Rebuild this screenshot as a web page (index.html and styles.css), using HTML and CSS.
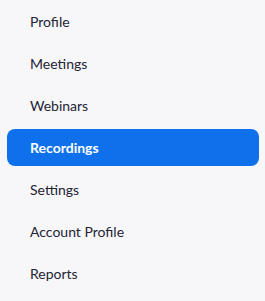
FILE: index.html
```
<!DOCTYPE html>
<html>
<head>
<meta charset="utf-8">
<link rel="stylesheet" href="styles.css">
</head>
<body>
<nav class="side-nav">
  <ul class="nav-list">
    <li class="nav-item">Profile</li>
    <li class="nav-item">Meetings</li>
    <li class="nav-item">Webinars</li>
    <li class="nav-item active">Recordings</li>
    <li class="nav-item">Settings</li>
    <li class="nav-item">Account Profile</li>
    <li class="nav-item">Reports</li>
  </ul>
</nav>
</body>
</html>
```
FILE: styles.css
```
html, body {
  margin: 0;
  padding: 0;
  background: #f7f7fa;
}
body {
  font-family: Lato, "Open Sans", sans-serif;
  width: 265px;
  height: 301px;
  overflow: hidden;
}
.nav-list {
  list-style: none;
  margin: 0;
  padding: 3px 6px 0 7px;
  display: flex;
  flex-direction: column;
  gap: 5px;
}
.nav-item {
  height: 37px;
  display: flex;
  align-items: center;
  padding-left: 23px;
  font-size: 14px;
  color: #232333;
  border-radius: 8px;
}
.nav-item.active {
  background: #0e71eb;
  color: #ffffff;
  font-weight: 700;
}
```
